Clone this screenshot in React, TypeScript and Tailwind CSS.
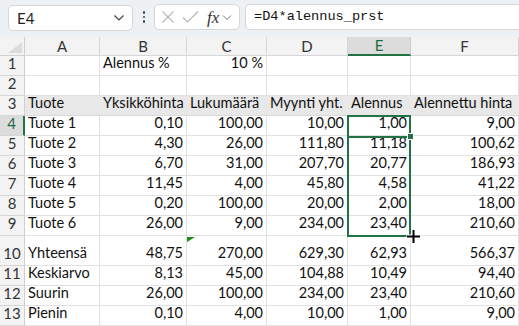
import React from "react";

type Cell = { t: string; r?: boolean };

const cols = ["A", "B", "C", "D", "E", "F"];

const L = (t: string): Cell => ({ t });
const R = (t: string): Cell => ({ t, r: true });
const E: Cell = { t: "" };

const rows: { n: number; h: number; cells: Cell[]; fill?: boolean }[] = [
  { n: 1, h: 20, cells: [E, L("Alennus %"), R("10 %"), E, E, E] },
  { n: 2, h: 20, cells: [E, E, E, E, E, E] },
  {
    n: 3,
    h: 20,
    fill: true,
    cells: [L("Tuote"), L("Yksikköhinta"), L("Lukumäärä"), L("Myynti yht."), L("Alennus"), L("Alennettu hinta")],
  },
  { n: 4, h: 20, cells: [L("Tuote 1"), R("0,10"), R("100,00"), R("10,00"), R("1,00"), R("9,00")] },
  { n: 5, h: 20, cells: [L("Tuote 2"), R("4,30"), R("26,00"), R("111,80"), R("11,18"), R("100,62")] },
  { n: 6, h: 20, cells: [L("Tuote 3"), R("6,70"), R("31,00"), R("207,70"), R("20,77"), R("186,93")] },
  { n: 7, h: 20, cells: [L("Tuote 4"), R("11,45"), R("4,00"), R("45,80"), R("4,58"), R("41,22")] },
  { n: 8, h: 20, cells: [L("Tuote 5"), R("0,20"), R("100,00"), R("20,00"), R("2,00"), R("18,00")] },
  { n: 9, h: 20, cells: [L("Tuote 6"), R("26,00"), R("9,00"), R("234,00"), R("23,40"), R("210,60")] },
  { n: 10, h: 30, cells: [L("Yhteensä"), R("48,75"), R("270,00"), R("629,30"), R("62,93"), R("566,37")] },
  { n: 11, h: 20, cells: [L("Keskiarvo"), R("8,13"), R("45,00"), R("104,88"), R("10,49"), R("94,40")] },
  { n: 12, h: 20, cells: [L("Suurin"), R("26,00"), R("100,00"), R("234,00"), R("23,40"), R("210,60")] },
  { n: 13, h: 20, cells: [L("Pienin"), R("0,10"), R("4,00"), R("10,00"), R("1,00"), R("9,00")] },
];

function Chevron({ className }: { className?: string }) {
  return (
    <svg width="12" height="8" viewBox="0 0 12 8" className={className}>
      <path d="M1.5 1.5 L6 6 L10.5 1.5" fill="none" stroke="#444" strokeWidth="1.2" />
    </svg>
  );
}

export default function App() {
  return (
    <div
      className="relative w-[519px] h-[326px] overflow-hidden bg-white text-[#111]"
      style={{ fontFamily: "Lato, 'Liberation Sans', sans-serif" }}
    >
      {/* Top bar */}
      <div className="h-[37px] bg-[#eef1f4] flex items-start pt-[4px] pl-[8px] gap-0">
        <div className="mt-[1px] w-[125px] h-[26px] bg-white border border-[#d6d6d6] rounded-[5px] flex items-center justify-between pl-[8px] pr-[7px]">
          <span className="text-[15px] text-[#222]">E4</span>
          <Chevron />
        </div>
        <div className="w-[20px] h-[26px] flex flex-col items-center justify-center gap-[2px] ml-[1px]">
          <div className="w-[2.5px] h-[2.5px] bg-[#444] rounded-full" />
          <div className="w-[2.5px] h-[2.5px] bg-[#444] rounded-full" />
          <div className="w-[2.5px] h-[2.5px] bg-[#444] rounded-full" />
        </div>
        <div className="w-[86px] h-[26px] bg-white border border-[#d6d6d6] rounded-[5px] flex items-center pl-[6px]">
          <svg width="14" height="14" viewBox="0 0 14 14">
            <path d="M1.5 1.5 L12.5 12.5 M12.5 1.5 L1.5 12.5" stroke="#b5b5b5" strokeWidth="1.1" />
          </svg>
          <svg width="17" height="14" viewBox="0 0 17 14" className="ml-[7px]">
            <path d="M1 7.5 L5.5 12 L16 1.5" fill="none" stroke="#b5b5b5" strokeWidth="1.1" />
          </svg>
          <span
            className="ml-[8px] text-[17px] italic text-[#333] leading-none"
            style={{ fontFamily: "'Liberation Serif', serif" }}
          >
            fx
          </span>
          <svg width="10" height="7" viewBox="0 0 10 7" className="ml-[3px]">
            <path d="M1 1.5 L5 5.5 L9 1.5" fill="none" stroke="#777" strokeWidth="1" />
          </svg>
        </div>
        <div className="ml-[5px] flex-1 h-[26px] bg-white border border-[#d6d6d6] border-r-0 rounded-l-[5px] flex items-center pl-[8px]">
          <span className="text-[13.6px] text-[#111]" style={{ fontFamily: "'Liberation Mono', monospace" }}>
            =D4*alennus_prst
          </span>
        </div>
      </div>

      {/* Grid */}
      <div className="relative">
        <div className="grid grid-cols-[25px_75px_87px_80px_81px_63px_108px]">
          {/* header row */}
          <div className="h-[19px] bg-[#f3f3f3] border-r border-b border-[#cfcfcf] relative">
            <svg width="14" height="11" viewBox="0 0 14 11" className="absolute right-[2px] bottom-[2px]">
              <path d="M14 0 L14 11 L0 11 Z" fill="#dcdcdc" />
            </svg>
          </div>
          {cols.map((c) => (
            <div
              key={c}
              className={
                c === "E"
                  ? "h-[19px] bg-[#dcdcdc] border-r border-[#cfcfcf] border-b-2 border-b-[#217346] text-[#1e6b41] text-[15px] flex items-center justify-center leading-none"
                  : "h-[19px] bg-[#f3f3f3] border-r border-b border-[#d6d6d6] text-[#333] text-[15px] flex items-center justify-center leading-none"
              }
            >
              {c}
            </div>
          ))}
          {rows.map((row) => (
            <React.Fragment key={row.n}>
              <div
                className={
                  row.n === 4
                    ? "bg-[#dcdcdc] border-r-2 border-r-[#217346] border-b border-[#d6d6d6] text-[#1e6b41] text-[15px] flex items-end justify-center pb-[1px]"
                    : "bg-[#f3f3f3] border-r border-r-[#cfcfcf] border-b border-[#d6d6d6] text-[#333] text-[15px] flex items-end justify-center pb-[1px]"
                }
                style={{ height: row.h }}
              >
                {row.n}
              </div>
              {row.cells.map((cell, i) => (
                <div
                  key={i}
                  className={
                    (row.fill ? "bg-[#e8e8e8] border-b border-[#dadada] " : "border-r border-b border-[#e1e1e1] ") +
                    (cell.r ? "justify-end pr-[3px] " : "justify-start pl-[3px] ") +
                    "flex items-end pb-[1px] text-[14.5px] whitespace-nowrap overflow-visible"
                  }
                  style={{ height: row.h }}
                >
                  {cell.t}
                </div>
              ))}
            </React.Fragment>
          ))}
        </div>

        {/* Fill-drag range outline E4:E9 */}
        <div className="absolute left-[347px] top-[78px] w-[64px] h-[122px] border-2 border-[#217346] pointer-events-none" />
        {/* Active cell E4 */}
        <div className="absolute left-[347px] top-[78px] w-[64px] h-[23px] border-2 border-[#217346] pointer-events-none" />
        {/* Fill handle */}
        <div className="absolute left-[408px] top-[97px] w-[5px] h-[5px] bg-[#217346] outline outline-1 outline-white" />
        {/* Error indicator triangle C10 */}
        <svg width="8" height="5" viewBox="0 0 8 5" className="absolute left-[187px] top-[200px]">
          <path d="M0 0 L8 0 L0 5 Z" fill="#1a8a1a" />
        </svg>
        {/* Crosshair cursor */}
        <svg width="15" height="15" viewBox="0 0 15 15" className="absolute left-[406px] top-[192px]">
          <path d="M7.5 0.5 V14.5 M0.5 7.5 H14.5" stroke="#fff" strokeWidth="4" />
          <path d="M7.5 1 V14 M1 7.5 H14" stroke="#000" strokeWidth="2" />
        </svg>
      </div>
    </div>
  );
}
